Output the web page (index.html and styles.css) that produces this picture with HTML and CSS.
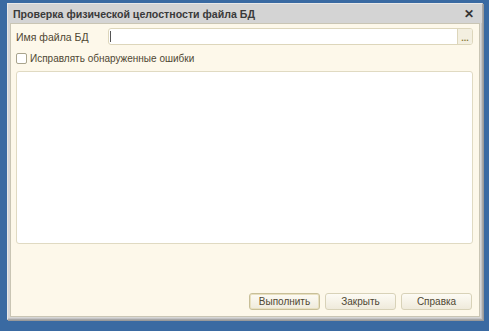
FILE: index.html
```html
<!DOCTYPE html>
<html lang="ru">
<head>
    <meta charset="UTF-8">
    <title>Проверка физической целостности файла БД</title>
    <link rel="stylesheet" href="styles.css">
</head>
<body>
    <!-- Dialog window -->
    <div class="window">
        <div class="title-bar">
            <span class="title">Проверка физической целостности файла БД</span>
            <span class="close-btn">&#10005;</span>
        </div>
        <div class="content">
            <div class="row">
                <label class="field-label" for="db-file">Имя файла БД</label>
                <div class="file-input">
                    <input type="text" id="db-file">
                    <span class="choose-btn">...</span>
                </div>
            </div>
            <label class="check-row">
                <span class="checkbox"></span>
                <span>Исправлять обнаруженные ошибки</span>
            </label>
            <div class="log-box"></div>
            <div class="buttons">
                <button class="btn btn-default">Выполнить</button>
                <button class="btn">Закрыть</button>
                <button class="btn">Справка</button>
            </div>
        </div>
    </div>
</body>
</html>
```
FILE: styles.css
```css
/* Global */
body {
    margin: 0;
    padding: 3px 6px 0 7px;
    background-color: #3a6aa2;
    font-family: 'Liberation Sans', Arial, sans-serif;
    font-size: 10px;
    color: #4f4733;
    height: 331px;
    box-sizing: border-box;
    overflow: hidden;
}

/* Window */
.window {
    height: 317px;
    display: flex;
    flex-direction: column;
    border: 1px solid #a8a8a8;
    border-left-color: #e8e8e8;
    border-top-color: #e8e8e8;
    box-shadow: inset -1px -1px 0 #c4c4c4, 1px 1px 0 #9a9a9a;
    background-color: #d6d6d6;
    box-sizing: border-box;
}

.title-bar {
    height: 19px;
    display: flex;
    align-items: center;
    justify-content: space-between;
    padding: 0 8px 0 5px;
    background-color: #d4d4d4;
}

.title {
    font-weight: bold;
    color: #3a3a3a;
    font-size: 10.6px;
}

.close-btn {
    font-size: 12px;
    font-weight: bold;
    color: #333;
}

.content {
    flex: 1;
    margin: 0 2px 2px 2px;
    padding: 4px 6px 6px 5px;
    background-color: #fdf8ea;
    border: 1px solid #c9c5b4;
    display: flex;
    flex-direction: column;
}

/* File row */
.row {
    display: flex;
    align-items: center;
    height: 17px;
}

.field-label {
    width: 92px;
    font-size: 10.5px;
}

.file-input {
    flex: 1;
    display: flex;
    height: 17px;
    border: 1px solid #ddd6bb;
    border-radius: 3px;
    background-color: #fff;
    box-sizing: border-box;
    overflow: hidden;
}

.file-input input {
    flex: 1;
    border: none;
    outline: none;
    padding: 0 2px;
    border-left: 1px solid #555;
    margin: 2px 0 2px 1px;
    font-family: inherit;
    font-size: 10px;
}

.choose-btn {
    width: 14px;
    border-left: 1px solid #ddd6bb;
    background-color: #f3efe0;
    color: #8a7a3a;
    font-size: 9px;
    font-weight: bold;
    text-align: center;
    line-height: 18px;
}

/* Checkbox */
.check-row {
    display: flex;
    align-items: center;
    margin-top: 7px;
    height: 12px;
}

.checkbox {
    width: 9px;
    height: 9px;
    border: 1px solid #a9a48c;
    border-radius: 2px;
    background-color: #fff;
    margin-right: 3px;
}

/* Log area */
.log-box {
    height: 171px;
    margin-top: 7px;
    background-color: #fff;
    border: 1px solid #e0dac2;
    border-radius: 3px;
}

/* Buttons */
.buttons {
    margin-top: auto;
    display: flex;
    justify-content: flex-end;
    gap: 5px;
    padding-right: 1px;
}

.btn {
    width: 71px;
    height: 17px;
    padding: 0;
    font-family: inherit;
    font-size: 10px;
    color: #4f4733;
    background: linear-gradient(#fdfbf4, #efeadb);
    border: 1px solid #d8d2b8;
    border-radius: 3px;
}

.btn-default {
    border-color: #c8bf98;
    box-shadow: inset 0 0 0 1px #e8e0c0;
}
```
